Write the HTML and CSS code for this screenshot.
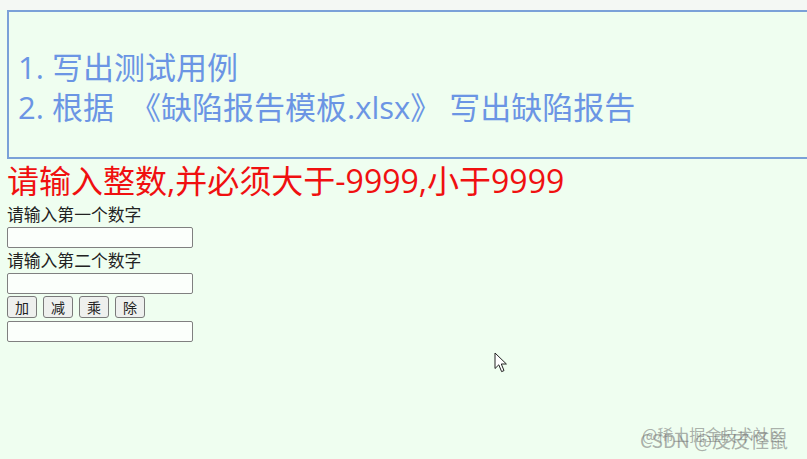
FILE: index.html
```html
<!DOCTYPE html>
<html lang="zh-CN">
<head>
<meta charset="utf-8">
<title>计算器</title>
<link rel="stylesheet" href="styles.css">
</head>
<body>
<div class="topstrip"></div>
<div class="task">
  <p>1. 写出测试用例</p>
  <p>2. 根据&nbsp; 《缺陷报告模板.xlsx》 写出缺陷报告</p>
</div>
<h2 class="hint">请输入整数,并必须大于-9999,小于9999</h2>
<form class="calc">
  <label class="lbl">请输入第一个数字</label>
  <input class="num" type="text">
  <label class="lbl">请输入第二个数字</label>
  <input class="num" type="text">
  <div class="ops">
    <button type="button" class="op">加</button>
    <button type="button" class="op">减</button>
    <button type="button" class="op">乘</button>
    <button type="button" class="op">除</button>
  </div>
  <input class="num result" type="text">
</form>
<svg class="pointer" width="14" height="22" viewBox="0 0 14 22" aria-hidden="true">
  <path d="M1 1 L1 16.5 L4.8 12.8 L7.6 19.6 L10 18.6 L7.3 12 L12.4 12 Z" fill="#fff" stroke="#222" stroke-width="1" stroke-linejoin="round"/>
</svg>
<div class="watermark">
  <span class="wm1">@稀土掘金技术社区</span>
  <span class="wm2">CSDN @皮皮怪鼠</span>
</div>
</body>
</html>
```
FILE: styles.css
```css
html, body {
  margin: 0;
  padding: 0;
  overflow: hidden;
  height: 100%;
}
body {
  background: #effef0;
  font-family: "Noto Sans CJK SC", "Noto Sans", sans-serif;
  position: relative;
}
.topstrip {
  height: 10px;
  background: #f4f8f4;
}
.task {
  margin-left: 7px;
  width: 840px;
  border: 2px solid #7ba1d8;
  padding: 35px 0 30px 9px;
  color: #6b95e4;
  font-family: "Open Sans", "Noto Sans CJK SC", sans-serif;
  font-size: 31px;
  line-height: 40px;
}
.task p {
  margin: 0;
  white-space: nowrap;
}
.hint {
  margin: 0 0 0 7px;
  color: #f01010;
  font-family: "Open Sans", "Noto Sans CJK SC", sans-serif;
  font-size: 32px;
  font-weight: normal;
  line-height: 44px;
  height: 43px;
  white-space: nowrap;
}
.calc {
  display: flex;
  flex-direction: column;
  align-items: flex-start;
  margin-left: 7px;
}
.lbl {
  font-size: 16.8px;
  color: #222;
  line-height: 25px;
  height: 25px;
}
.num {
  box-sizing: border-box;
  width: 186px;
  height: 21px;
  margin: 0;
  border: 1px solid #808080;
  border-radius: 2px;
  background: #fbfffb;
  padding: 0 3px;
}
.ops {
  display: flex;
  gap: 6px;
  margin-top: 2px;
}
.op {
  box-sizing: border-box;
  width: 30px;
  height: 22px;
  padding: 0;
  border: 1px solid #7a7a7a;
  border-radius: 3px;
  background: #eef0ee;
  color: #222;
  font-family: "Noto Sans CJK SC", sans-serif;
  font-size: 14px;
  line-height: 20px;
}
.result {
  margin-top: 3px;
}
.pointer {
  position: absolute;
  left: 494px;
  top: 352px;
}
.watermark {
  position: absolute;
  left: 640px;
  top: 422px;
  width: 160px;
  height: 32px;
}
.wm1, .wm2 {
  position: absolute;
  white-space: nowrap;
  color: rgba(110, 110, 110, 0.55);
}
.wm1 {
  left: 2px;
  top: 0;
  font-size: 16px;
}
.wm2 {
  left: 0;
  top: 4px;
  font-size: 19px;
}
```
